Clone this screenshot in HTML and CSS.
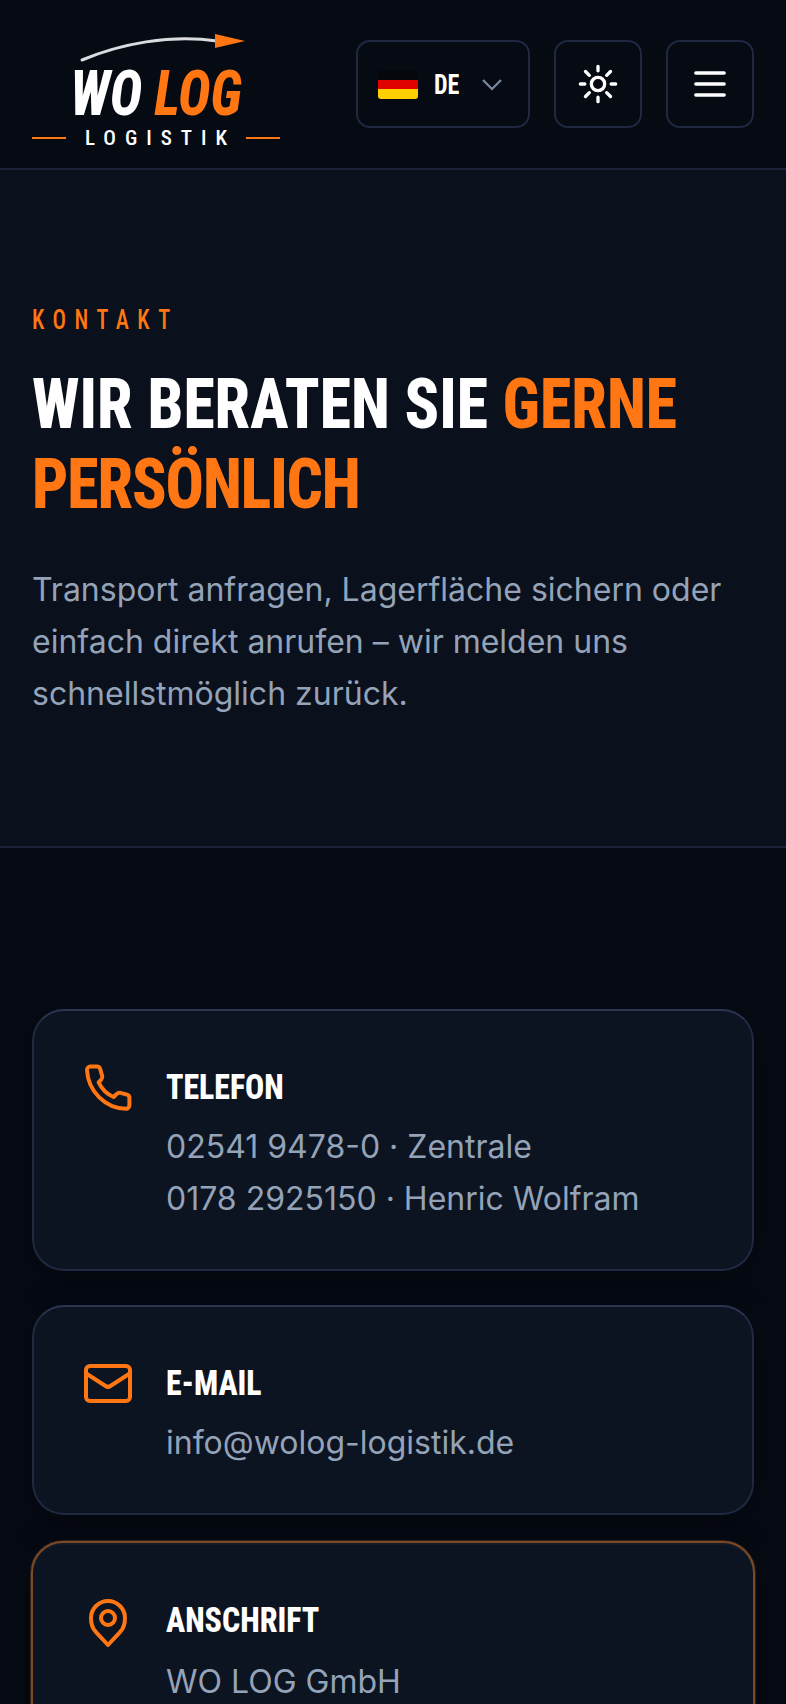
FILE: index.html
```html
<!DOCTYPE html>
<html lang="de">
<head>
    <meta charset="UTF-8">
    <meta name="viewport" content="width=device-width, initial-scale=1.0">
    <title>WO LOG Logistik - Kontakt</title>
    <link rel="stylesheet" href="styles.css">
</head>
<body>
    <header class="site-header">
        <a class="logo" href="#">
            <svg class="logo-arrow" viewBox="0 0 180 28" width="180" height="28">
                <path d="M2 26 C40 10 90 0 137 7" fill="none" stroke="#d9dbdf" stroke-width="3" stroke-linecap="round"/>
                <polygon points="135,0 165,7 135,14" fill="#ff7613"/>
            </svg>
            <span class="logo-name">WO <em>LOG</em></span>
            <span class="logo-sub"><i></i><b>LOGISTIK</b><i></i></span>
        </a>
        <div class="header-actions">
            <button class="btn-box lang-btn" type="button">
                <span class="flag"></span>
                <span class="lang-code">DE</span>
                <svg class="chevron" viewBox="0 0 24 24" width="24" height="24"><path d="M3 8 L12 17 L21 8" fill="none" stroke="#7d8ba6" stroke-width="2"/></svg>
            </button>
            <button class="btn-box" type="button" aria-label="Theme">
                <svg viewBox="0 0 24 24" width="40" height="40" fill="none" stroke="#fff" stroke-width="2" stroke-linecap="round">
                    <circle cx="12" cy="12" r="4"/>
                    <path d="M12 1.400v2.700M12 19.900v2.700M4.500 4.500l2.300 2.300M17.200 17.200l2.300 2.300M1.400 12h2.700M19.900 12h2.700M6.800 17.200l-2.300 2.300M19.500 4.500l-2.300 2.300"/>
                </svg>
            </button>
            <button class="btn-box" type="button" aria-label="Menu">
                <svg viewBox="0 0 24 24" width="40" height="40" fill="none" stroke="#fff" stroke-width="2" stroke-linecap="round">
                    <path d="M3.500 5.400h17M3.500 12h17M3.500 18.600h17"/>
                </svg>
            </button>
        </div>
    </header>

    <section class="hero">
        <div class="eyebrow">KONTAKT</div>
        <h1>WIR BERATEN SIE <span>GERNE</span> <span class="tight">PERSÖNLICH</span></h1>
        <p>Transport anfragen, Lagerfläche sichern oder einfach direkt anrufen – wir melden uns schnellstmöglich zurück.</p>
    </section>

    <section class="contact">
        <div class="card">
            <svg class="card-icon" viewBox="0 0 24 24" width="48" height="48"><path d="M1.500 3C1.500 2 2.200 1.300 3.200 1.300H6.600C7.300 1.300 7.900 1.800 8.100 2.500L9.100 6C9.300 6.700 9.100 7.300 8.600 7.800L7.300 9.200C8.800 12.300 11.700 15.200 14.800 16.500L16.400 14.900C16.900 14.400 17.500 14.200 18.200 14.400L21.500 15.300C22.200 15.500 22.700 16.100 22.700 16.800V20.500C22.700 21.500 22 22.400 21 22.400C10.500 22.200 2 13.500 1.500 3Z"/></svg>
            <div class="card-text">
                <h2>TELEFON</h2>
                <div class="line">02541 9478-0 · Zentrale</div>
                <div class="line">0178 2925150 · Henric Wolfram</div>
            </div>
        </div>
        <div class="card">
            <svg class="card-icon" viewBox="0 0 24 24" width="48" height="48"><rect x="1" y="3" width="22" height="17.500" rx="2"/><path d="M1.500 7L10.800 13C11.500 13.500 12.500 13.500 13.200 13L22.500 7"/></svg>
            <div class="card-text">
                <h2>E-MAIL</h2>
                <div class="line">info@wolog-logistik.de</div>
            </div>
        </div>
        <div class="card card-accent">
            <svg class="card-icon" viewBox="0 0 24 24" width="48" height="48"><path d="M12 24L6 17.600C4.300 15.800 3.500 13.200 3.500 10.500C3.500 5.800 7.300 2 12 2S20.500 5.800 20.500 10.500C20.500 13.200 19.700 15.800 18 17.600Z"/><circle cx="12" cy="10.500" r="3.500"/></svg>
            <div class="card-text">
                <h2>ANSCHRIFT</h2>
                <div class="line">WO LOG GmbH</div>
            </div>
        </div>
    </section>
</body>
</html>
```

FILE: styles.css
```css
* { box-sizing: border-box; }
html, body { margin: 0; padding: 0; height: 1704px; overflow: hidden; }
body { background: #060a13; color: #fff; font-family: Inter, "Liberation Sans", sans-serif; }

.site-header {
    height: 170px;
    display: flex;
    align-items: flex-start;
    justify-content: space-between;
    padding: 0 32px;
    background: #060a13;
    border-bottom: 2px solid #1b2338;
}

/* logo */
.logo { display: block; width: 248px; color: #fff; text-decoration: none; padding-top: 34px; }
.logo-arrow { display: block; margin-left: 48px; overflow: visible; }
.logo-name {
    display: block;
    width: 290px;
    margin: 7px 0 0 -21px;
    text-align: center;
    white-space: nowrap;
    font-family: Roboto, sans-serif;
    font-stretch: 75%;
    font-size: 63px;
    line-height: 50px;
    font-weight: 800;
    font-style: italic;
    transform: scaleX(0.87);
}
.logo-name em { color: #ff7613; }
.logo-sub { display: flex; align-items: center; justify-content: space-between; margin-top: 8px; }
.logo-sub i { display: block; width: 34px; height: 2px; background: #ff7613; }
.logo-sub b { font-family: Roboto, sans-serif; font-stretch: 75%; font-size: 21px; font-weight: 500; letter-spacing: 9px; line-height: 22px; margin-right: -9px; }

/* header buttons */
.header-actions { display: flex; gap: 24px; padding-top: 40px; }
.btn-box {
    width: 88px;
    height: 88px;
    display: flex;
    align-items: center;
    justify-content: center;
    padding: 0;
    background: transparent;
    border: 2px solid #1f2840;
    border-radius: 14px;
    color: #fff;
}
.lang-btn { width: 174px; justify-content: flex-start; padding-left: 20px; }
.flag { display: block; width: 40px; height: 29px; border-radius: 3px; background: linear-gradient(#05070c 0 33.3%, #e00000 33.3% 66.6%, #ffcf00 66.6%); }
.lang-code { width: 29px; font-family: Roboto, sans-serif; font-stretch: 75%; font-size: 28px; font-weight: 700; margin-left: 16px; transform: scaleX(0.86); transform-origin: left; }
.chevron { margin-left: 17px; }

/* hero */
.hero {
    height: 678px;
    padding: 135px 32px 0;
    background: #0a101c;
    border-bottom: 2px solid #1b2338;
}
.eyebrow {
    width: 125%;
    color: #ff7613;
    font-family: Roboto, sans-serif;
    font-stretch: 75%;
    font-size: 28px;
    font-weight: 500;
    line-height: 30px;
    letter-spacing: 10.600px;
    transform: scaleX(0.8);
    transform-origin: left;
}
.hero h1 {
    width: 110%;
    margin: 29px 0 0;
    font-family: Roboto, sans-serif;
    font-stretch: 75%;
    font-size: 70px;
    line-height: 80px;
    font-weight: 800;
    transform: scaleX(0.91);
    transform-origin: left;
}
.hero h1 span { color: #ff7613; }
.hero h1 .tight { letter-spacing: -1.200px; }
.hero p { margin: 40px 0 0; font-size: 32px; line-height: 52px; color: #94a3b8; }

/* contact cards */
.contact { padding: 161px 32px 0; display: flex; flex-direction: column; gap: 34px; }
.card {
    display: flex;
    gap: 34px;
    padding: 53px 48px 44px;
    background: #0c1321;
    border: 2px solid #1f2a42;
    border-top-color: #2a3550;
    border-radius: 32px;
    box-shadow: 0 8px 32px rgba(0, 0, 0, 0.3);
}
.card-accent {
    margin: -8px -1px 0;
    padding: 54px 49px 41px;
    border-color: #7a4a28;
    box-shadow: 0 0 0 1px rgba(122, 74, 40, 0.4), inset 0 2px 0 rgba(255, 255, 255, 0.03), 0 8px 32px rgba(0, 0, 0, 0.3);
}
.card-icon { flex: none; width: 48px; height: 48px; margin: 0 0 0 2px; overflow: visible; fill: none; stroke: #ff7613; stroke-width: 2; stroke-linecap: round; stroke-linejoin: round; }
.card-text h2 {
    margin: 0 0 9px;
    font-family: Roboto, sans-serif;
    font-stretch: 75%;
    font-size: 35px;
    line-height: 48px;
    font-weight: 800;
    transform: scaleX(0.91);
    transform-origin: left;
}
.card-accent .card-text h2 { margin-bottom: 11px; }
.line { font-size: 32px; line-height: 52px; color: #94a3b8; }
```
